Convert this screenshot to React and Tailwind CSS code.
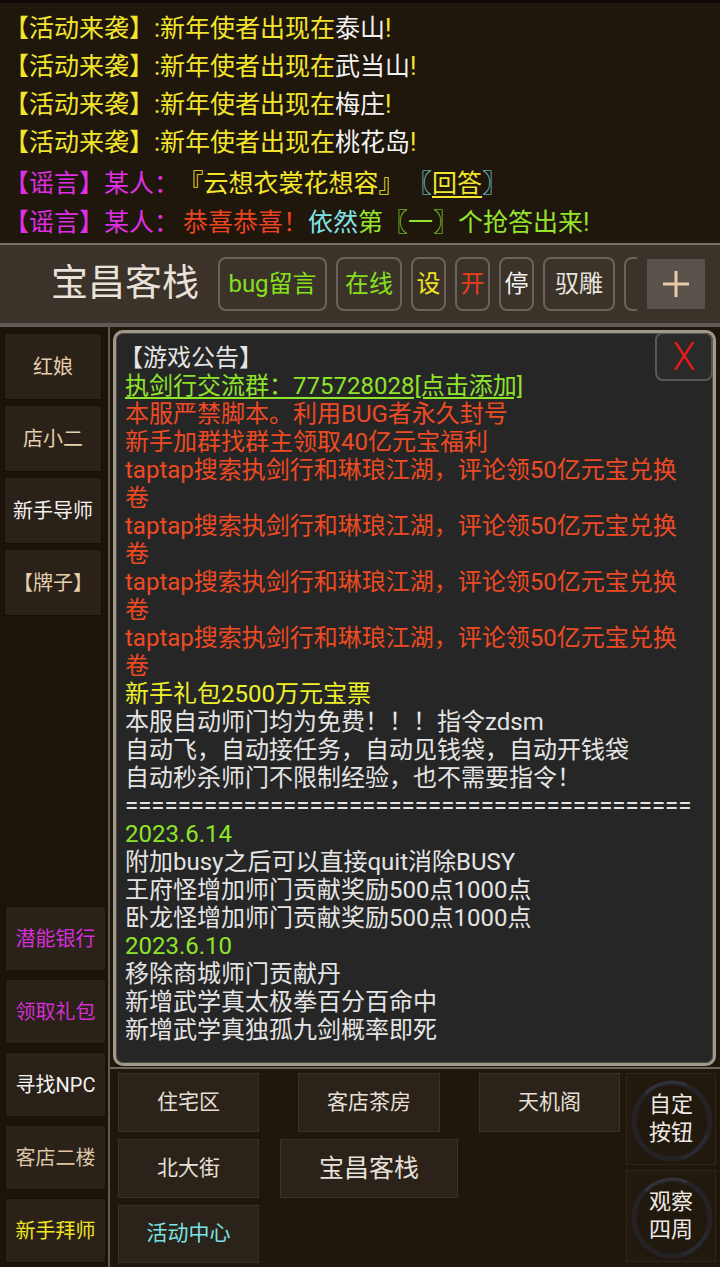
import React from "react";

const YEL = "text-[#f3e52c]";
const WHT = "text-[#f2f2f2]";
const MAG = "text-[#e02fe4]";
const RED = "text-[#ec4421]";
const CYA = "text-[#7fe3e6]";
const GRN = "text-[#97e42c]";

const places = ["泰山", "武当山", "梅庄", "桃花岛"];

const notice = [
  { t: "【游戏公告】", c: "text-[#e4e4e4] ml-[-6px]" },
  { t: "执剑行交流群：775728028[点击添加]", c: "text-[#8fe32b] underline underline-offset-[3px]" },
  { t: "本服严禁脚本。利用BUG者永久封号", c: "text-[#ee4a23]" },
  { t: "新手加群找群主领取40亿元宝福利", c: "text-[#ee4a23]" },
  { t: "taptap搜索执剑行和琳琅江湖，评论领50亿元宝兑换", c: "text-[#ee4a23]" },
  { t: "卷", c: "text-[#ee4a23]" },
  { t: "taptap搜索执剑行和琳琅江湖，评论领50亿元宝兑换", c: "text-[#ee4a23]" },
  { t: "卷", c: "text-[#ee4a23]" },
  { t: "taptap搜索执剑行和琳琅江湖，评论领50亿元宝兑换", c: "text-[#ee4a23]" },
  { t: "卷", c: "text-[#ee4a23]" },
  { t: "taptap搜索执剑行和琳琅江湖，评论领50亿元宝兑换", c: "text-[#ee4a23]" },
  { t: "卷", c: "text-[#ee4a23]" },
  { t: "新手礼包2500万元宝票", c: "text-[#eef02a]" },
  { t: "本服自动师门均为免费！！！指令zdsm", c: "text-[#e4e4e4]" },
  { t: "自动飞，自动接任务，自动见钱袋，自动开钱袋", c: "text-[#e4e4e4]" },
  { t: "自动秒杀师门不限制经验，也不需要指令！", c: "text-[#e4e4e4]" },
  { t: "=".repeat(43), c: "text-[#e4e4e4]" },
  { t: "2023.6.14", c: "text-[#8fe32b]" },
  { t: "附加busy之后可以直接quit消除BUSY", c: "text-[#e4e4e4]" },
  { t: "王府怪增加师门贡献奖励500点1000点", c: "text-[#e4e4e4]" },
  { t: "卧龙怪增加师门贡献奖励500点1000点", c: "text-[#e4e4e4]" },
  { t: "2023.6.10", c: "text-[#8fe32b]" },
  { t: "移除商城师门贡献丹", c: "text-[#e4e4e4]" },
  { t: "新增武学真太极拳百分百命中", c: "text-[#e4e4e4]" },
  { t: "新增武学真独孤九剑概率即死", c: "text-[#e4e4e4]" },
];

function TopBtn({ children, className = "" }) {
  return (
    <div
      className={`h-[54px] shrink-0 rounded-[8px] border-2 border-[#6b635b] flex items-center justify-center text-[24px] ${className}`}
    >
      {children}
    </div>
  );
}

function SideBtn({ children, className = "" }) {
  return (
    <div
      className={`bg-[#2a2118] border border-[#17100a] flex items-center justify-center text-[20px] ${className}`}
    >
      {children}
    </div>
  );
}

function MapBtn({ children, className = "" }) {
  return (
    <div
      className={`h-full shrink-0 bg-[#2b2219] border border-[#3a3026] flex items-center justify-center text-[21px] ${className}`}
    >
      {children}
    </div>
  );
}

function RingBtn({ a, b }) {
  return (
    <div className="relative h-[92px] bg-[#21180e] border border-[#2e251b] flex flex-col items-center justify-center text-[22px] leading-[28px] text-[#eeeae4]">
      <svg className="absolute inset-0" width="90" height="92" viewBox="0 0 90 92">
        <circle cx="45" cy="47" r="38" fill="none" stroke="#25262a" strokeWidth="5" opacity="0.8" />
        <path d="M18 20 A38 38 0 0 1 60 11" fill="none" stroke="#313338" strokeWidth="3" />
        <path d="M80 60 A38 38 0 0 1 55 84" fill="none" stroke="#2c2e33" strokeWidth="2" />
      </svg>
      <span className="relative">{a}</span>
      <span className="relative">{b}</span>
    </div>
  );
}

export default function App() {
  return (
    <div className="w-[720px] h-[1267px] overflow-hidden bg-[#1f160c] flex flex-col font-[family-name:Roboto,'Noto_Sans_CJK_SC',sans-serif]">

      {/* chat */}
      <div className="h-[243px] shrink-0 border-t-[3px] border-[#0e0905] pl-[4px] pt-[7px] text-[25px] leading-[38px] whitespace-nowrap">
        {places.map((p) => (
          <div key={p}>
            <span className={YEL}>【活动来袭】:新年使者出现在</span>
            <span className={WHT}>{p}</span>
            <span className={YEL}>!</span>
          </div>
        ))}
        <div className="mt-[3px]">
          <span className={MAG}>【谣言】某人：</span>
          <span className={`${YEL} ml-[12px]`}>『云想衣裳花想容』</span>
          <span className={`${CYA} ml-[16px]`}>〖</span>
          <span className={`${YEL} underline underline-offset-[4px]`}>回答</span>
          <span className={CYA}>〗</span>
        </div>
        <div className="mt-[1px]">
          <span className={MAG}>【谣言】某人：</span>
          <span className={`${RED} ml-[4px]`}>恭喜恭喜！</span>
          <span className={CYA}>依然</span>
          <span className={GRN}>第〖一〗个抢答出来!</span>
        </div>
      </div>

      {/* header */}
      <div className="h-[84px] shrink-0 bg-[#3b3229] border-t-2 border-t-[#78726b] border-b-[4px] border-b-[#5f5a53] flex items-center">
        <div className="w-[218px] shrink-0 pl-[51px] text-[37px] text-[#e8e2da]">宝昌客栈</div>
        <div className="w-[419px] shrink-0 overflow-hidden flex gap-[9px]">
          <TopBtn className="w-[109px] text-[#86e01e]">bug留言</TopBtn>
          <TopBtn className="w-[66px] text-[#86e01e]">在线</TopBtn>
          <TopBtn className="w-[35px] text-[#f0e424]">设</TopBtn>
          <TopBtn className="w-[35px] text-[#ec3c1c]">开</TopBtn>
          <TopBtn className="w-[35px] text-[#f2f2f2]">停</TopBtn>
          <TopBtn className="w-[72px] text-[#e6e2dc]">驭雕</TopBtn>
          <TopBtn className="w-[72px]" />
        </div>
        <div className="ml-[10px] w-[58px] h-[50px] bg-[#5a524a] flex items-center justify-center">
          <svg width="30" height="30" viewBox="0 0 30 30">
            <path d="M15 2 V28 M2 15 H28" stroke="#e8caa8" strokeWidth="3" />
          </svg>
        </div>
      </div>

      {/* main */}
      <div className="flex flex-1 min-h-0">
        <div className="w-[110px] shrink-0 border-r-2 border-[#5d5851] bg-[#1c1409] flex flex-col justify-between pt-[6px] pb-[4px]">
          <div className="flex flex-col gap-[5px] pl-[4px]">
            <SideBtn className="w-[98px] h-[67px] text-[#e6cfae]">红娘</SideBtn>
            <SideBtn className="w-[98px] h-[67px] text-[#e6cfae]">店小二</SideBtn>
            <SideBtn className="w-[98px] h-[67px] text-[#f2f2f2]">新手导师</SideBtn>
            <SideBtn className="w-[98px] h-[67px] text-[#e6cfae]">【牌子】</SideBtn>
          </div>
          <div className="flex flex-col gap-[8px] pl-[5px]">
            <SideBtn className="w-[101px] h-[65px] text-[#d42fd6]">潜能银行</SideBtn>
            <SideBtn className="w-[101px] h-[65px] text-[#d42fd6]">领取礼包</SideBtn>
            <SideBtn className="w-[101px] h-[65px] text-[#f2f2f2]">寻找NPC</SideBtn>
            <SideBtn className="w-[101px] h-[65px] text-[#dcc4a4]">客店二楼</SideBtn>
            <SideBtn className="w-[101px] h-[65px] text-[#f0e424]">新手拜师</SideBtn>
          </div>
        </div>

        <div className="flex-1 flex flex-col min-w-0">
          {/* notice */}
          <div className="relative mt-[3px] ml-[3px] mr-[4px] h-[736px] shrink-0 rounded-[10px] border-[3px] border-[#a09a8c] bg-[#262626] shadow-[inset_0_0_0_1px_#4f4a44] pl-[9px] pt-[11px] text-[24px] leading-[28px] whitespace-nowrap overflow-hidden">
            {notice.map((l, i) => (
              <div key={i} className={l.c}>{l.t}</div>
            ))}
            <div className="absolute top-[-1px] right-0 w-[58px] h-[49px] rounded-[8px] border-2 border-[#5c5752] bg-[#2a2a2a] flex items-center justify-center text-[38px] font-light text-[#e31b1b]">
              X
            </div>
          </div>
          <div className="mt-[1px] h-[2px] shrink-0 bg-[#6d675f]" />

          {/* map buttons */}
          <div className="flex flex-1 pt-[4px] pl-[8px]">
            <div className="w-[502px] flex flex-col gap-[7px] text-[#e6e0d8]">
              <div className="flex h-[59px]">
                <MapBtn className="w-[141px]">住宅区</MapBtn>
                <MapBtn className="w-[142px] ml-[39px]">客店茶房</MapBtn>
                <MapBtn className="w-[141px] ml-[39px]">天机阁</MapBtn>
              </div>
              <div className="flex h-[59px]">
                <MapBtn className="w-[141px]">北大街</MapBtn>
                <MapBtn className="w-[178px] ml-[21px] text-[25px]">宝昌客栈</MapBtn>
              </div>
              <div className="flex h-[58px]">
                <MapBtn className="w-[141px] text-[#79e2e4]">活动中心</MapBtn>
              </div>
            </div>
            <div className="ml-[6px] w-[90px] flex flex-col gap-[5px]">
              <RingBtn a="自定" b="按钮" />
              <RingBtn a="观察" b="四周" />
            </div>
          </div>
        </div>
      </div>
    </div>
  );
}
